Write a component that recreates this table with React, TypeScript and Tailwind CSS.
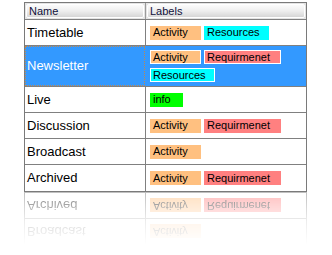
import { FC } from 'react';

type Tag = 'Activity' | 'Resources' | 'Requirmenet' | 'info';

type Row = {
  name: string;
  tags: Tag[];
  selected?: boolean;
};

const rows: Row[] = [
  { name: 'Timetable', tags: ['Activity', 'Resources'] },
  { name: 'Newsletter', tags: ['Activity', 'Requirmenet', 'Resources'], selected: true },
  { name: 'Live', tags: ['info'] },
  { name: 'Discussion', tags: ['Activity', 'Requirmenet'] },
  { name: 'Broadcast', tags: ['Activity'] },
  { name: 'Archived', tags: ['Activity', 'Requirmenet'] },
];

// fixed widths, the chips in the picture are not sized by text
const tagStyle: Record<Tag, string> = {
  Activity: 'w-[51px] bg-[#ffc080]',
  Resources: 'w-[65px] bg-[#00ffff]',
  Requirmenet: 'w-[77px] bg-[#ff8080]',
  info: 'w-[33px] bg-[#00ff00]',
};

const Chip: FC<{ tag: Tag; selected?: boolean }> = ({ tag, selected }) => (
  <span
    className={`flex h-[14px] items-center border pl-[2px] text-[11px] leading-none text-black ${tagStyle[tag]} ${
      selected ? 'border-white' : 'border-transparent'
    }`}
  >
    {tag}
  </span>
);

const TableRow: FC<{ row: Row; last?: boolean }> = ({ row, last }) => {
  const { name, tags, selected } = row;
  return (
    <div
      className={`flex ${selected ? 'h-[41px] bg-[#3399ff]' : 'h-[26px]'} ${last ? '' : 'border-b border-[#808080]'}`}
    >
      <div
        className={`flex w-[121px] shrink-0 border-r ${selected ? 'border-[#3399ff]' : 'border-[#808080]'}`}
      >
        <div
          className={`flex flex-1 items-center pl-[1px] text-[13px] ${
            selected ? 'border border-dotted border-[#c08850] text-white' : 'border border-transparent text-black'
          }`}
        >
          {name}
        </div>
      </div>
      <div className="flex flex-1 flex-wrap content-center items-center gap-x-[3px] gap-y-[4px] pl-[4px]">
        {tags.map((tag, i) => (
          <Chip key={i} tag={tag} selected={selected} />
        ))}
      </div>
    </div>
  );
};

const HeaderCell: FC<{ label: string; className?: string }> = ({ label, className }) => (
  <div className={`flex h-full p-[1px] ${className ?? ''}`}>
    <div className="flex flex-1 items-center rounded-[2px] border border-white bg-gradient-to-b from-[#fbfbfb] via-[#eeeeee] to-[#d6d6d6] pl-[2px] text-[11px] leading-none text-[#10103a]">
      {label}
    </div>
  </div>
);

export default function App() {
  const reflected = rows.slice(4);

  return (
    <div className="h-[255px] w-[332px] overflow-hidden bg-white pl-[24px] pt-[2px] font-['Liberation_Sans',Arial,sans-serif]">
      <div className="w-[283px] border border-[#7a7a7a]">
        <div className="flex h-[17px] border-b border-[#808080] bg-[#e4e4e4]">
          <HeaderCell label="Name" className="w-[121px] shrink-0 border-r border-[#9a9a9a]" />
          <HeaderCell label="Labels" className="flex-1" />
        </div>
        {rows.map((row, i) => (
          <TableRow key={row.name} row={row} last={i === rows.length - 1} />
        ))}
      </div>

      {/* mirrored copy fading out below the table */}
      <div className="w-[283px]">
        <div className="-scale-y-100 blur-[0.7px] [mask-image:linear-gradient(to_top,rgba(0,0,0,0.5)_0%,rgba(0,0,0,0.15)_55%,transparent_100%)]">
          <div className="border-x border-t border-[#808080]">
            {reflected.map((row) => (
              <TableRow key={row.name} row={row} />
            ))}
          </div>
        </div>
      </div>
    </div>
  );
}
